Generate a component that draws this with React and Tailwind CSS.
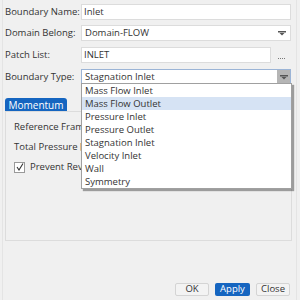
import React from "react";

const items = [
  "Mass Flow Inlet",
  "Mass Flow Outlet",
  "Pressure Inlet",
  "Pressure Outlet",
  "Stagnation Inlet",
  "Velocity Inlet",
  "Wall",
  "Symmetry",
];

function Arrow() {
  return (
    <svg width="8" height="5" viewBox="0 0 8 5">
      <rect x="0" y="0" width="8" height="1.5" fill="#555" />
      <polygon points="1.5,2 6.5,2 4,4.5" fill="#555" />
    </svg>
  );
}

export default function App() {
  return (
    <div
      className="relative w-[300px] h-[300px] bg-[#f0f0f0] overflow-hidden text-[9.5px] text-[#333] whitespace-nowrap"
      style={{ fontFamily: '"Open Sans", "Noto Sans", sans-serif' }}
    >
      <div className="absolute left-[2px] top-0 bottom-0 w-px bg-[#e4e4e4]" />
      <div className="absolute right-[3px] top-0 bottom-0 w-px bg-[#e4e4e4]" />
      <div className="flex flex-col pt-[4px] pl-[5px] pr-[9px] gap-[5px]">
        <div className="flex items-center h-[16px]">
          <div className="w-[76px] shrink-0">Boundary Name:</div>
          <div className="flex-1 h-[16px] bg-white border border-[#dcdcdc] pl-[2px] flex items-center">Inlet</div>
        </div>
        <div className="flex items-center h-[16px]">
          <div className="w-[76px] shrink-0">Domain Belong:</div>
          <div className="flex-1 h-[16px] bg-white border border-[#dcdcdc] pl-[3px] pr-[4px] flex items-center justify-between">
            <span>Domain-FLOW</span>
            <Arrow />
          </div>
        </div>
        <div className="flex items-center h-[16px] mt-[1px]">
          <div className="w-[76px] shrink-0">Patch List:</div>
          <div className="flex-1 h-[16px] bg-white border border-[#dcdcdc] pl-[2px] flex items-center">INLET</div>
          <div className="w-[20px] shrink-0 flex justify-center items-end h-[16px] pb-[3px]">
            <div className="w-[7px] h-[2px] border-t border-dotted border-[#777]" />
          </div>
        </div>
        <div className="flex items-center h-[16px] mt-[1px]">
          <div className="w-[76px] shrink-0">Boundary Type:</div>
          <div className="flex-1 h-[16px] bg-white border border-[#9bb4d6] pl-[3px] flex items-center justify-between">
            <span>Stagnation Inlet</span>
            <div className="w-[13px] h-full bg-[#b5b5b5] flex items-center justify-center">
              <Arrow />
            </div>
          </div>
        </div>
      </div>

      <div className="mt-[13px] ml-[5px] mr-[8px]">
        <div className="w-[62px] h-[13px] bg-[#1565c0] rounded-t-[3px] text-white flex items-center justify-center text-[10px] leading-none">
          Momentum
        </div>
        <div className="h-[130px] border border-[#dcdcdc] flex flex-col pl-[8px] pt-[9px] gap-[8px]">
          <div className="leading-[12px]">Reference Frame</div>
          <div className="leading-[12px]">Total Pressure [Pa]</div>
          <div className="flex items-center gap-[5px] -mt-[1px]">
            <div className="w-[11px] h-[11px] bg-white border border-[#999] flex items-center justify-center">
              <svg width="8" height="8" viewBox="0 0 8 8">
                <path d="M1 4 L3 7 L7 0.5" stroke="#333" strokeWidth="1.1" fill="none" />
              </svg>
            </div>
            <span>Prevent Reverse Flow</span>
          </div>
        </div>
      </div>

      <div className="absolute left-[175px] top-[283px] flex gap-[6px]">
        <div className="w-[34px] h-[13px] border border-[#d4d4d4] bg-[#f3f3f3] rounded-[2px] flex items-center justify-center">OK</div>
        <div className="w-[35px] h-[13px] bg-[#1565c0] rounded-[2px] text-white flex items-center justify-center">Apply</div>
        <div className="w-[34px] h-[13px] border border-[#d4d4d4] bg-[#f3f3f3] rounded-[2px] flex items-center justify-center">Close</div>
      </div>

      <div className="absolute left-[81px] top-[83px] w-[211px] bg-white border border-[#a0a0a0] shadow-[2px_2px_1px_rgba(0,0,0,0.35)]">
        {items.map((it, i) => (
          <div
            key={it}
            className={`h-[13px] leading-[13px] pl-[3px] ${i === 1 ? "bg-[#d6e3f4]" : ""}`}
          >
            {it}
          </div>
        ))}
      </div>
    </div>
  );
}
